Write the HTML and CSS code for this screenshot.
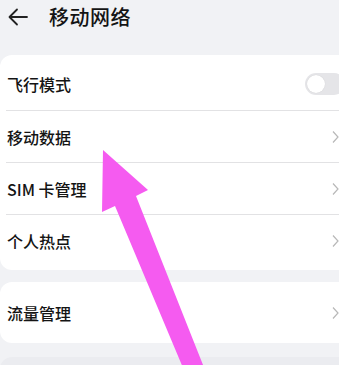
FILE: index.html
```html
<!DOCTYPE html>
<html lang="zh">
<head>
<meta charset="utf-8">
<link rel="stylesheet" href="styles.css">
</head>
<body>
<div class="page">
  <header class="topbar">
    <svg class="back" width="22" height="22" viewBox="0 0 22 22"><path d="M20 11H3M10 3.5L2.5 11L10 18.5" fill="none" stroke="#222" stroke-width="1.8" stroke-linecap="round" stroke-linejoin="round"/></svg>
    <h1 class="title">移动网络</h1>
  </header>

  <section class="card card-main">
    <div class="row">
      <span class="label">飞行模式</span>
      <span class="toggle"><span class="knob"></span></span>
    </div>
    <div class="row">
      <span class="label">移动数据</span>
      <svg class="chev" width="7" height="14" viewBox="0 0 7 14"><path d="M1 1.5L6 7L1 12.5" fill="none" stroke="#b8b8b8" stroke-width="1.2"/></svg>
    </div>
    <div class="row">
      <span class="label">SIM 卡管理</span>
      <svg class="chev" width="7" height="14" viewBox="0 0 7 14"><path d="M1 1.5L6 7L1 12.5" fill="none" stroke="#b8b8b8" stroke-width="1.2"/></svg>
    </div>
    <div class="row">
      <span class="label">个人热点</span>
      <svg class="chev" width="7" height="14" viewBox="0 0 7 14"><path d="M1 1.5L6 7L1 12.5" fill="none" stroke="#b8b8b8" stroke-width="1.2"/></svg>
    </div>
  </section>

  <section class="card card-second">
    <div class="row">
      <span class="label">流量管理</span>
      <svg class="chev" width="7" height="14" viewBox="0 0 7 14"><path d="M1 1.5L6 7L1 12.5" fill="none" stroke="#b8b8b8" stroke-width="1.2"/></svg>
    </div>
  </section>

  <div class="next-band"></div>

  <svg class="annot" width="339" height="365" viewBox="0 0 339 365">
    <polygon points="103,150 148,190 136,196 207,375 186,375 115,206 102,212" fill="#f55bf0"/>
  </svg>
</div>
</body>
</html>
```

FILE: styles.css
```css
html, body {
  margin: 0;
  padding: 0;
}
body {
  background: #f1f2f5;
  font-family: "Noto Sans CJK SC", "Noto Sans", sans-serif;
  color: #141414;
}
.page {
  position: relative;
  width: 339px;
  height: 365px;
  overflow: hidden;
}
.topbar {
  height: 34px;
  display: flex;
  align-items: center;
  padding-left: 7px;
  gap: 20px;
}
.back {
  display: block;
}
.title {
  margin: 0;
  font-size: 20px;
  font-weight: 500;
  line-height: 1;
  letter-spacing: 0.5px;
}
.card {
  background: #fff;
  width: 345px;
  border-radius: 12px 0 0 12px;
  padding-left: 6px;
  box-sizing: border-box;
}
.card-main {
  margin-top: 21px;
  padding-top: 3px;
  padding-bottom: 4px;
}
.card-second {
  margin-top: 12px;
  padding-top: 4px;
  padding-bottom: 4px;
}
.row {
  height: 52px;
  box-sizing: border-box;
  display: flex;
  align-items: center;
  justify-content: space-between;
  padding-left: 1px;
  padding-right: 6px;
}
.card-second .row {
  height: 53px;
}
.row + .row {
  border-top: 1px solid #e2e2e4;
}
.label {
  font-size: 16px;
  font-weight: 500;
  line-height: 1;
}
.chev {
  display: block;
}
.toggle {
  width: 40px;
  height: 22px;
  border-radius: 11px;
  background: #e5e5e8;
  margin-right: -6px;
  position: relative;
  display: block;
}
.knob {
  position: absolute;
  left: 2px;
  top: 2px;
  width: 18px;
  height: 18px;
  border-radius: 50%;
  background: #fff;
  box-shadow: 0 0 1px rgba(0,0,0,0.15);
}
.next-band {
  margin-top: 14px;
  height: 20px;
  background: #ebecf0;
  border-radius: 12px 0 0 0;
}
.annot {
  position: absolute;
  left: 0;
  top: 0;
  pointer-events: none;
}
```
